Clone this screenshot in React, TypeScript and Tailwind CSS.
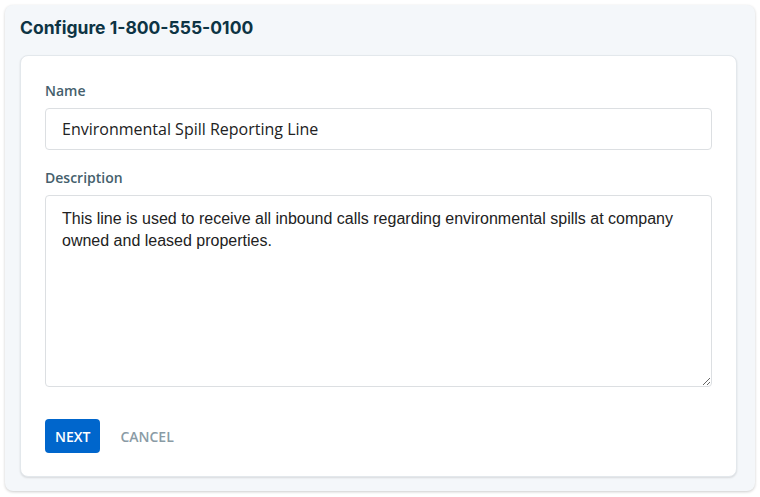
import { useState } from 'react';

function App() {
     const [name, setName] = useState('Environmental Spill Reporting Line');
     const [description, setDescription] = useState(
          'This line is used to receive all inbound calls regarding environmental spills at company owned and leased properties.'
     );

     return (
          <div className="w-[760px] h-[497px] bg-white p-[5px] pb-[6px]" style={{ fontFamily: '"Open Sans", sans-serif' }}>
               <div className="h-full rounded-lg bg-[#f4f7fa] shadow-[0_1px_3px_rgba(0,0,0,0.2)] pl-[15px] pr-[18px] pt-[12px] pb-[14px] flex flex-col">
                    <h1 className="font-['Inter',sans-serif] font-bold text-[17.5px] leading-[22px] text-[#0d3444] mb-[16px]">
                         Configure 1-800-555-0100
                    </h1>

                    {/* Form card */}
                    <div className="flex-1 bg-white rounded-lg border border-[#e3e8ec] shadow-[0_1px_2px_rgba(0,0,0,0.12)] px-[24px] pt-[26px]">
                         <label className="block text-[14px] leading-[18px] font-semibold text-[#45606c] mb-[8px]">Name</label>
                         <input
                              value={name}
                              onChange={(e) => setName(e.target.value)}
                              className="block w-full h-[42px] rounded border border-[#dcdfe2] px-[16px] text-[16px] text-[#222] outline-none"
                         />

                         <label className="block text-[14px] leading-[18px] font-semibold text-[#45606c] mt-[19px] mb-[8px]">Description</label>
                         <textarea
                              value={description}
                              onChange={(e) => setDescription(e.target.value)}
                              className="block w-full h-[192px] rounded border border-[#dcdfe2] px-[16px] py-[12px] text-[16px] leading-[22px] text-[#222] outline-none font-['Liberation_Sans',Arial,sans-serif]"
                         />

                         <div className="flex items-center gap-[20px] mt-[32px]">
                              <button className="h-[34px] px-[10px] rounded bg-[#0066cc] text-white text-[14px] font-semibold">NEXT</button>
                              <button className="h-[34px] text-[14px] font-semibold text-[#8a9ba5]">CANCEL</button>
                         </div>
                    </div>
               </div>
          </div>
     );
}

export default App;
